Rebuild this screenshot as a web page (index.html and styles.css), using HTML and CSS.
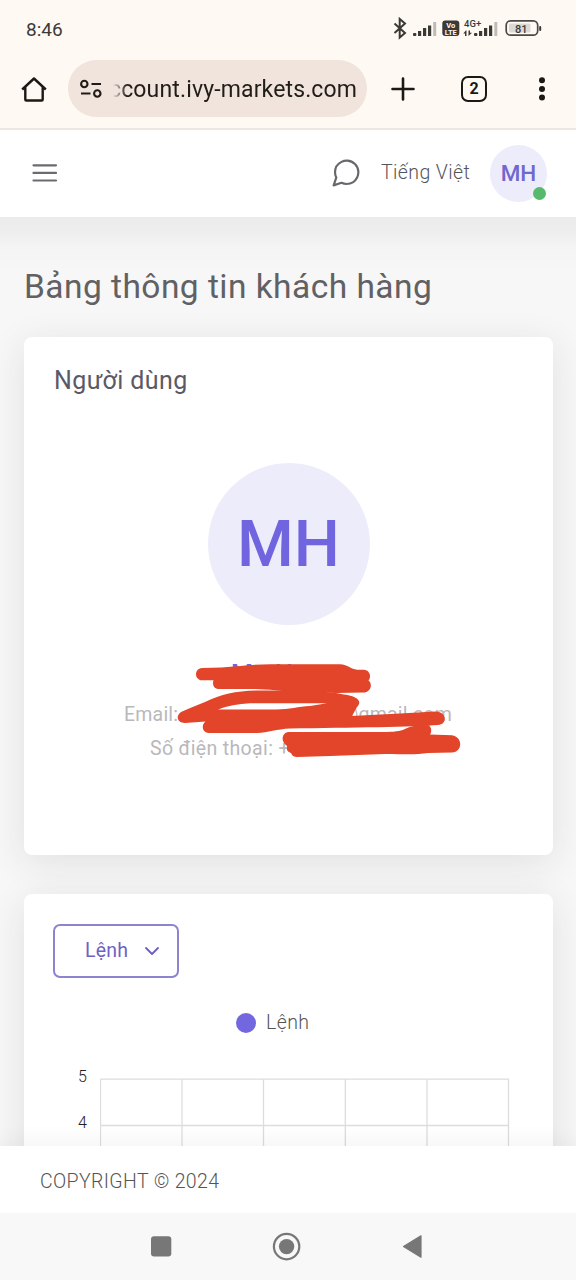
FILE: index.html
```html
<!DOCTYPE html>
<html lang="vi">
<head>
<meta charset="utf-8">
<title>Bảng thông tin khách hàng</title>
<link rel="stylesheet" href="styles.css">
</head>
<body>
<div class="phone">
  <header class="status">
    <span class="clock">8:46</span>
    <svg class="status-icons" width="160" height="30" viewBox="388 14 160 30">
      <path d="M394.5 23.5 L405 33 L399.7 37.5 V19 L405 23.5 L394.5 33" fill="none" stroke="#3b3936" stroke-width="2"/>
      <g fill="#3b3936">
        <rect x="413" y="33" width="3.4" height="3" rx="1"/><rect x="418" y="31" width="3.2" height="5"/><rect x="423" y="28" width="3.2" height="8"/><rect x="428" y="25.500" width="3.200" height="10.500"/>
        <rect x="442.300" y="20.500" width="17" height="15.500" rx="3"/>
        <rect x="474" y="33" width="3.400" height="3" rx="1"/><rect x="479" y="31" width="3.200" height="5"/><rect x="484" y="28" width="3.200" height="8"/><rect x="489" y="25.500" width="3.200" height="10.500"/>
        <path d="M465.800 30.500 L463.300 33.500 H465 V36 H466.500 V30.500Z M468.500 30.500 V36 L472 32.800 H470 V30.500Z"/>
        <rect x="539.200" y="26" width="2" height="5" rx="1"/>
      </g>
      <rect x="433.200" y="22" width="3" height="14" fill="#bfbbb6"/><rect x="494.300" y="22" width="3" height="14" fill="#bfbbb6"/>
      <rect x="506.200" y="20.800" width="31.500" height="14.400" rx="4.500" fill="none" stroke="#4b4946" stroke-width="1.700"/>
      <rect x="509" y="23.500" width="21.500" height="9" rx="1.500" fill="#dcd9d5"/>
      <g class="tiny">
        <text x="450.800" y="27.700" font-size="7.500" fill="#fffaf3">Vo</text>
        <text x="450.800" y="34.600" font-size="7.500" fill="#fffaf3">LTE</text>
        <text class="medium" x="472.700" y="27" font-size="9.500" fill="#3b3936">4G+</text>
        <text class="medium" x="521.300" y="32.600" font-size="11" fill="#3b3936">81</text>
      </g>
    </svg>
  </header>

  <div class="browser">
    <svg class="home" width="28" height="28" viewBox="20 75 28 28"><path d="M22.200 89.500 L34 78.500 L45.800 89.500 M25.300 87 V99.500 Q25.300 100.500 26.300 100.500 H41.700 Q42.700 100.500 42.700 99.500 V87" fill="none" stroke="#1b1915" stroke-width="2.400" stroke-linejoin="round"/></svg>
    <div class="address">
      <svg width="24" height="22" viewBox="79 78 24 22"><g fill="none" stroke="#1f1b16" stroke-width="2.100"><circle cx="84.300" cy="84" r="3.200"/><path d="M91.500 84 H101 M81 93.500 H90.500"/><circle cx="97.300" cy="93.500" r="3.200"/></g></svg>
      <span class="url">ccount.ivy-markets.com</span>
    </div>
    <svg class="plus" width="24" height="24" viewBox="0 0 24 24"><path d="M12 1.500V22.500M1.500 12H22.500" stroke="#1b1915" stroke-width="2.600" stroke-linecap="round"/></svg>
    <span class="tabs">2</span>
    <svg class="more" width="8" height="26" viewBox="0 0 8 26"><g fill="#1b1915"><circle cx="4" cy="4.300" r="3"/><circle cx="4" cy="13" r="3"/><circle cx="4" cy="21.500" r="3"/></g></svg>
  </div>

  <nav class="navbar">
    <svg class="menu" width="26" height="20" viewBox="0 0 26 20"><path d="M1.500 2.300H24M1.500 9.900H24M1.500 17.500H24" stroke="#6b6a70" stroke-width="2.200" stroke-linecap="round"/></svg>
    <svg class="chat" width="28" height="28" viewBox="1.800 1.800 20.400 20.400"><path d="M21 11.500a8.380 8.380 0 0 1-.9 3.800 8.500 8.500 0 0 1-7.600 4.700 8.380 8.380 0 0 1-3.800-.9L3 21l1.900-5.700a8.380 8.380 0 0 1-.9-3.800 8.500 8.500 0 0 1 4.700-7.600 8.380 8.380 0 0 1 3.800-.9h.5a8.480 8.480 0 0 1 8 8v.5z" fill="none" stroke="#68676c" stroke-width="1.600" stroke-linejoin="round"/></svg>
    <span class="lang">Tiếng Việt</span>
    <span class="avatar">MH<i class="online"></i></span>
  </nav>

  <main class="content">
    <h1>Bảng thông tin khách hàng</h1>
    <section class="card user">
      <h2>Người dùng</h2>
      <div class="portrait">MH</div>
      <div class="name"><span>M</span><span>H</span></div>
      <div class="email"><span>Email:</span><span>@gmail.com</span></div>
      <div class="phone-no">Số điện thoại: +</div>
      <svg class="scribble" width="290" height="100" viewBox="174 660 290 100">
        <g fill="#e24529">
          <path d="M202 668 Q222 668 240 666 Q258 664 275 664.300 H340 C348 664.500 351 669.500 357 669.700 H364 C370 670 371.500 677 368.500 680.500 C373 684 371 692.500 363 692.500 L336 693 L285 691.300 Q270 689.500 255 689 H219 C214 689 212 685 213.500 680.300 H202 C194 680 194 668.500 202 668Z"/>
          <path fill-rule="evenodd" d="M181 712 Q190 708 205 702 C222 694 236 691 258 690.500 H310 L336 693 C343 694.500 350 695 354 697 C361 700 360 704 357 707 L352 716 Q375 714.500 400 713.500 L435 711.500 C447 711 448 724.500 438 725 C415 727 350 727.500 290 728.500 C277 729 268 732.800 257 733 H209 C202 732.500 201 725 205.500 721.500 L185 723 C177 723 175.500 716 181 712Z M218 709.500 H276 C290 709.500 298 706.500 310 706 L327 703.200 H250 Q232 704 218 709.500Z"/>
          <path d="M288 732 H375 C388 732 395 732 401 730.500 C408 728 410 726 417 725.700 L428 725 C431 726 432.500 731 430 734.500 L452 735.300 C463 737 463 752 452 752.500 L428 753 C415 755 405 754 385 754 L330 756 L297 757 C292 756.500 292 754.500 291 753 C286 751 287 749 287 746 C281 742 281 733.500 288 732Z"/>
        </g>
      </svg>
    </section>
    <section class="card orders">
      <button class="select">Lệnh<svg width="16" height="10" viewBox="0 0 16 10"><path d="M2 2L8 8L14 2" fill="none" stroke="#6d62c4" stroke-width="1.900" stroke-linecap="round" stroke-linejoin="round"/></svg></button>
      <div class="legend"><i class="dot"></i><span>Lệnh</span></div>
      <div class="chart">
        <div class="axis"><span>5</span><span>4</span></div>
        <svg width="411" height="90" viewBox="100 1078 411 90"><path d="M100.500 1079.200H509M100.500 1125.500H509M100.500 1079V1168M182 1079V1168M263.500 1079V1168M345.300 1079V1168M427 1079V1168M508.500 1079V1168" fill="none" stroke="#dddddd" stroke-width="1.300"/></svg>
      </div>
    </section>
  </main>

  <footer class="footer">COPYRIGHT © 2024</footer>
  <div class="system">
    <svg width="576" height="67" viewBox="0 1213 576 67"><g fill="#777"><rect x="151" y="1236.300" width="20.300" height="20.300" rx="3"/><circle cx="286.600" cy="1246.600" r="7.700"/><circle cx="286.600" cy="1246.600" r="12.700" fill="none" stroke="#777" stroke-width="2.200"/><path d="M403.500 1246.500 L421 1235.800 V1257.200Z" stroke="#777" stroke-width="1.200" stroke-linejoin="round"/></g></svg>
  </div>
</div>
</body>
</html>
```
FILE: styles.css
```css
* { box-sizing: border-box; }
body { margin: 0; font-family: Roboto, "Noto Sans", sans-serif; }
h1, h2 { margin: 0; font-weight: 400; }
svg { display: block; flex: none; }

.phone { width: 576px; height: 1280px; display: flex; flex-direction: column; overflow: hidden; }

.status { height: 58px; background: #fefaf3; display: flex; justify-content: space-between; padding: 14px 28px 0 26px; flex: none; }
.clock { font: 400 19px/31px Roboto, sans-serif; color: #3c3a37; }
.tiny text { font-family: Roboto, sans-serif; font-weight: 700; text-anchor: middle; }
.tiny .medium { font-weight: 500; }

.browser { height: 72px; background: #fefaf3; border-bottom: 2px solid #eee6e1; display: flex; align-items: flex-start; padding: 2px 30px 0 20px; flex: none; }
.home { margin-top: 15px; }
.address { width: 299px; height: 57px; margin-left: 20px; border-radius: 29px; background: #f0e4dc; display: flex; align-items: center; padding-left: 11px; }
.url { margin: 2px 0 0 6px; white-space: nowrap; font: 400 23px/34px Roboto, sans-serif; color: #211d19; letter-spacing: .14px; -webkit-mask-image: linear-gradient(90deg, transparent 4px, #000 18px); mask-image: linear-gradient(90deg, transparent 4px, #000 18px); }
.plus { margin: 17px 0 0 24px; }
.tabs { width: 26px; height: 26px; margin: 16px 0 0 46px; border: 2.5px solid #1b1915; border-radius: 7px; font: 700 16px/22px Roboto, sans-serif; text-align: center; color: #1b1915; flex: none; }
.more { margin: 16px 0 0 51px; }

.navbar { height: 87px; background: #fff; display: flex; align-items: center; padding: 0 29px 1px 32px; flex: none; }
.menu { margin-right: 274px; }
.lang { margin-left: 21px; width: 89px; white-space: nowrap; font: 300 19.5px/28px Roboto, sans-serif; color: #555459; letter-spacing: .4px; }
.avatar { position: relative; width: 57px; height: 57px; margin-left: 20px; border-radius: 50%; background: #edecfb; color: #7067cf; font: 500 22.500px/56px Roboto, sans-serif; text-align: center; flex: none; }
.online { position: absolute; right: 1px; bottom: 2px; width: 13px; height: 13px; border-radius: 50%; background: #56b96e; }

.content { height: 929px; overflow: hidden; background: linear-gradient(#ebebeb, #eeeeee 16px, #f4f4f4 28px, #f7f7f7 55px, #f7f7f7); padding: 51px 23px 0 24px; flex: none; }
h1 { height: 69px; font-size: 33.500px; line-height: 38px; color: #616063; white-space: nowrap; letter-spacing: .46px; }
.card { position: relative; background: #fff; border-radius: 8px; box-shadow: 0 7px 36px rgba(34, 34, 34, .105); }
.user { height: 518px; margin-bottom: 39px; padding: 29px 30px; display: flex; flex-direction: column; }
h2 { height: 97px; font-size: 25px; line-height: 30px; color: #5c5966; letter-spacing: .4px; }
.portrait { width: 162px; height: 162px; margin: 0 auto; border-radius: 50%; background: #edecfb; color: #7165df; font: 500 65px/162px Roboto, sans-serif; text-align: center; flex: none; }
.name { display: flex; gap: 22px; margin: 33px 0 0 177px; font: 500 25px/34px Roboto, sans-serif; color: #7165df; }
.email, .phone-no { font: 400 19.500px/30px Roboto, sans-serif; color: #b9b8bc; white-space: nowrap; letter-spacing: .2px; }
.email { display: flex; justify-content: space-between; width: 328px; margin: 8px 0 0 70px; }
.phone-no { margin: 4px 0 0 96px; letter-spacing: .36px; }
.scribble { position: absolute; left: 150px; top: 323px; }

.orders { height: 420px; padding: 30px 29px; }
.select { width: 126px; height: 54px; border: 2px solid #8c84cf; border-radius: 7px; background: #fff; color: #6d62c4; display: flex; align-items: center; gap: 16px; padding: 0 0 1px 30px; font: 400 19.500px/28px Roboto, sans-serif; letter-spacing: .2px; }
.legend { display: flex; align-items: center; gap: 10px; margin: 29px 0 0 183px; height: 32px; font: 300 19.500px/30px Roboto, sans-serif; color: #555; letter-spacing: .4px; }
.dot { width: 20px; height: 20px; border-radius: 50%; background: #7367e0; }
.chart { display: flex; margin-top: 39px; padding-left: 24px; }
.axis { display: flex; flex-direction: column; width: 23px; margin-top: -11px; font: 300 16px/20px Roboto, sans-serif; color: #222; gap: 26px; }
.axis span { padding-left: 1px; }

.footer { height: 67px; background: #fff; padding: 20px 0 0 40px; font: 300 19.500px/32px Roboto, sans-serif; color: #555; position: relative; box-shadow: 0 -4px 22px rgba(34, 34, 34, .055); flex: none; letter-spacing: .36px; }
.system { height: 67px; background: #f8f8f8; flex: none; position: relative; }
```
